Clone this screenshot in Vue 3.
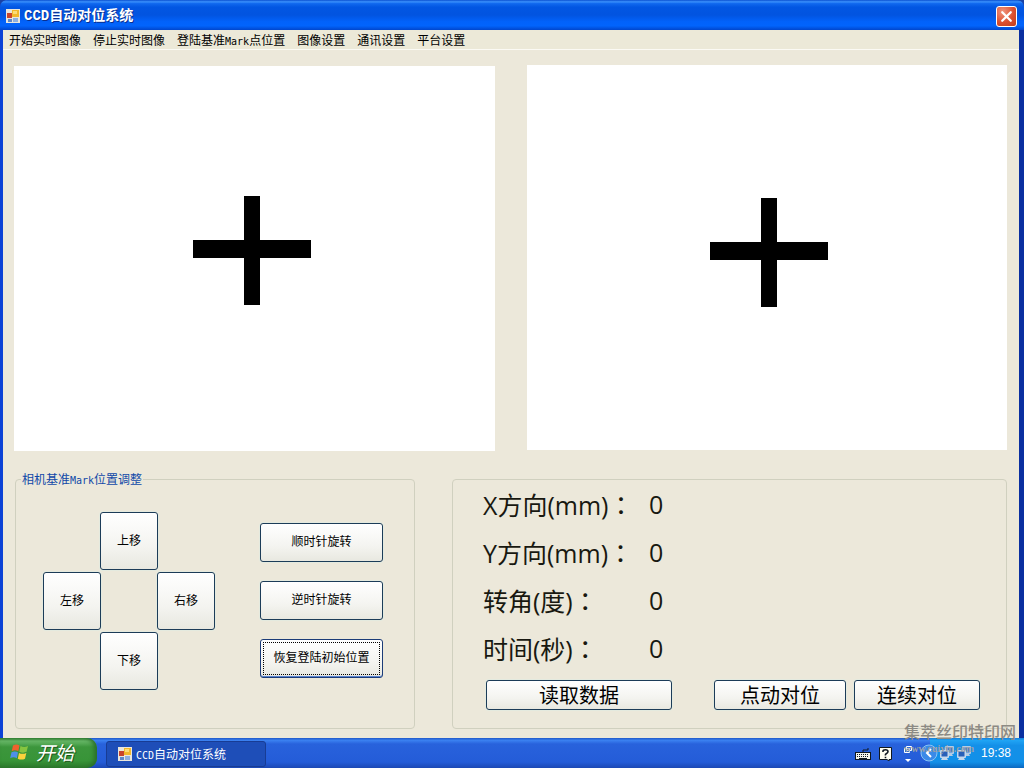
<script setup>
import { reactive } from 'vue'

const menus = [
  ['开始实时图像'],
  ['停止实时图像'],
  ['登陆基准', 'Mark', '点位置'],
  ['图像设置'],
  ['通讯设置'],
  ['平台设置']
]
const moves = [
  { name: 'up', text: '上移' },
  { name: 'left', text: '左移' },
  { name: 'right', text: '右移' },
  { name: 'down', text: '下移' }
]
const readings = reactive([
  { id: 'x', label: 'X方向(mm)', value: 0 },
  { id: 'y', label: 'Y方向(mm)', value: 0 },
  { id: 'angle', label: '转角(度)', value: 0 },
  { id: 'time', label: '时间(秒)', value: 0 }
])
</script>

<template>
  <div class="desktop">
    <div class="window">
      <header class="titlebar">
        <svg class="app-icon" viewBox="0 0 14 14" aria-hidden="true">
          <rect width="14" height="14" fill="#e9e6dc" />
          <rect x="1" y="4" width="5" height="5" fill="#c8452c" />
          <rect x="6" y="1" width="7" height="7" fill="#f2b82c" />
          <rect x="7" y="2" width="4" height="3" fill="#fbdc78" />
          <rect x="2" y="10" width="4" height="3" fill="#5f87c9" />
          <rect x="7" y="9" width="5" height="4" fill="#8fb0e0" />
        </svg>
        <h1>CCD自动对位系统</h1>
        <button class="close" aria-label="关闭">
          <svg viewBox="0 0 20 20" aria-hidden="true">
            <path d="M5.5 5.500 14.500 14.500M14.500 5.500 5.500 14.500" stroke="#fff" stroke-width="2.400" stroke-linecap="round" />
          </svg>
        </button>
      </header>

      <nav class="menubar">
        <button v-for="m in menus" :key="m[0]">{{ m[0] }}<span v-if="m[1]" class="latin">{{ m[1] }}</span>{{ m[2] }}</button>
      </nav>

      <main class="client">
        <div class="cameras">
          <svg class="camera first" viewBox="0 0 481 385" role="img" aria-label="相机1">
            <rect width="481" height="385" fill="#fff" />
            <rect x="179" y="174" width="118" height="18" />
            <rect x="230" y="130" width="16" height="109" />
          </svg>
          <svg class="camera" viewBox="0 0 480 385" role="img" aria-label="相机2">
            <rect width="480" height="385" fill="#fff" />
            <rect x="183" y="177" width="118" height="18" />
            <rect x="234" y="133" width="16" height="109" />
          </svg>
        </div>

        <div class="panels">
          <fieldset class="adjust">
            <legend>相机基准<span class="latin">Mark</span>位置调整</legend>
            <div class="adjust-body">
              <div class="pad">
                <button v-for="m in moves" :key="m.name" class="btn" :class="m.name">{{ m.text }}</button>
              </div>
              <div class="rotate">
                <button class="btn">顺时针旋转</button>
                <button class="btn">逆时针旋转</button>
                <button class="btn focused">恢复登陆初始位置</button>
              </div>
            </div>
          </fieldset>

          <section class="results">
            <div v-for="r in readings" :key="r.id" class="reading">
              <label :for="r.id">{{ r.label }}<span class="colon">：</span></label>
              <output :id="r.id">{{ r.value }}</output>
            </div>
            <div class="actions">
              <button class="btn read">读取数据</button>
              <button class="btn jog">点动对位</button>
              <button class="btn loop">连续对位</button>
            </div>
          </section>
        </div>
      </main>
    </div>

    <footer class="taskbar">
      <button class="start">
        <svg viewBox="0 0 20 20" aria-hidden="true">
          <path d="M3 3.500Q6.500 1.500 9.500 3.500L8.300 9.300Q5 7.500 1.700 9.200Z" fill="#f0622d" />
          <path d="M10.500 4Q14 5.800 18 4L16.600 9.800Q13 11.500 9.300 9.700Z" fill="#86c440" />
          <path d="M1.500 10.300Q5 8.600 8 10.400L6.800 16.200Q3.500 14.500 .2 16.200Z" fill="#4f8fe8" />
          <path d="M9 10.900Q12.600 12.600 16.300 10.900L15 16.700Q11.500 18.500 7.800 16.700Z" fill="#fbd23c" />
        </svg>
        <span>开始</span>
      </button>
      <button class="task">
        <svg class="app-icon" viewBox="0 0 14 14" aria-hidden="true">
          <rect width="14" height="14" fill="#e9e6dc" />
          <rect x="1" y="4" width="5" height="5" fill="#c8452c" />
          <rect x="6" y="1" width="7" height="7" fill="#f2b82c" />
          <rect x="7" y="2" width="4" height="3" fill="#fbdc78" />
          <rect x="2" y="10" width="4" height="3" fill="#5f87c9" />
          <rect x="7" y="9" width="5" height="4" fill="#8fb0e0" />
        </svg>
        <span><span class="latin">CCD</span>自动对位系统</span>
      </button>

      <div class="language">
        <svg class="keyboard" viewBox="0 0 16 12" aria-hidden="true">
          <path d="M8 4V2H13V0" fill="none" stroke="#101820" />
          <rect x=".5" y="4.500" width="15" height="7" fill="#f4f4ea" stroke="#101820" />
          <path d="M2 6.500H14M2 8.500H14" stroke="#101820" stroke-dasharray="1 1" />
          <path d="M4 10.500H12" stroke="#101820" />
        </svg>
        <svg class="help" viewBox="0 0 13 14" aria-hidden="true">
          <path d="M.5 .5H12.500V12.500H10V14L8 12.500H.5Z" fill="#fffff0" stroke="#101820" />
          <path d="M4 5V4Q4 2.800 6.500 2.800T9 4.600Q9 5.800 7.500 6.500T6.500 8.500M6.500 9.700V11.200" fill="none" stroke="#101820" stroke-width="1.600" />
        </svg>
        <svg class="restore" viewBox="0 0 10 18" aria-hidden="true">
          <path d="M3.500 1.500H8.500V5.500H3.500ZM1.500 3.500H6.500V7.500H1.500Z" fill="#2a63d8" stroke="#fff" />
          <path d="M2 14H8L5 17Z" fill="#fff" />
        </svg>
      </div>

      <div class="tray">
        <svg class="arrow" viewBox="0 0 18 18" aria-hidden="true">
          <circle cx="9" cy="9" r="8" fill="#3a8ae8" stroke="#8ac4f4" />
          <path d="M11 5 7 9 11 13" fill="none" stroke="#fff" stroke-width="2" />
        </svg>
        <svg v-for="n in 2" :key="n" class="network" viewBox="0 0 16 16" aria-hidden="true">
          <rect x="6" y="1" width="9" height="8" rx="1" fill="#b4cce4" />
          <rect x="7.500" y="2.500" width="6" height="5" fill="#3c7cd0" />
          <path d="M9 9H13L14 11H9Z" fill="#b4cce4" />
          <rect x="1" y="5" width="9" height="8" rx="1" fill="#c4d8ec" />
          <rect x="2.500" y="6.500" width="6" height="5" fill="#2860b8" />
          <path d="M3 13H8L9 15H2Z" fill="#c4d8ec" />
        </svg>
        <time>19:38</time>
      </div>
    </footer>

    <div class="watermark" aria-hidden="true">
      <span>集萃丝印特印网</span>
      <small>www.cuiyin.com</small>
    </div>
  </div>
</template>

<style>
body {
  background: #ece9d8;
}
</style>

<style scoped>
* {
  box-sizing: border-box;
}
.desktop {
  position: relative;
  min-height: 100vh;
  display: flex;
  flex-direction: column;
  background: #1941a5;
  font: 12px/14px "Noto Sans CJK SC", sans-serif;
  color: #000;
}
button {
  margin: 0;
  padding: 0;
  border: 0;
  background: none;
  font: inherit;
  color: inherit;
}
svg {
  display: block;
  flex: none;
}
.latin {
  font: 10px/10px "DejaVu Sans Mono", monospace;
}
.window {
  flex: 1;
  display: flex;
  flex-direction: column;
  border: solid #0b42d6;
  border-width: 0 5px 0 3px;
  border-right-color: #0a2fa0;
  border-radius: 8px 8px 0 0;
  background: #ece9d8;
}
.titlebar {
  height: 30px;
  margin: 0 -5px 0 -3px;
  padding: 2px 7px 0 6px;
  display: flex;
  align-items: center;
  border-radius: 7px 7px 0 0;
  background: linear-gradient(#0a50d0 0, #3a90fc 6%, #1068ee 12%, #0256e2 24%, #0254e0 50%, #0262fa 72%, #0264fc 86%, #0146cc 100%);
  color: #fff;
}
.app-icon {
  width: 14px;
  height: 14px;
}
h1 {
  flex: 1;
  margin: 0 0 0 4px;
  font: bold 14px/20px "Liberation Mono", "Noto Sans CJK SC", monospace;
  text-shadow: 1px 1px #0a2f90;
}
.close {
  width: 21px;
  height: 21px;
  border: 1px solid #fff;
  border-radius: 3px;
  background: radial-gradient(circle at 30% 25%, #f0947c, #dc5030 55%, #c03c18);
}
.close svg {
  width: 19px;
  height: 19px;
}
.menubar {
  height: 20px;
  padding: 0 6px;
  display: flex;
  align-items: center;
  gap: 12px;
  border-bottom: 1px solid #fbfaf4;
}
.client {
  flex: 1;
  padding: 15px 12px 8px 11px;
  background: #ece8da;
}
.cameras {
  display: grid;
  grid-template-columns: 481fr 480fr;
  gap: 32px;
  align-items: start;
}
.camera {
  width: 100%;
  height: auto;
}
.camera.first {
  margin-top: 1px;
}
.panels {
  display: grid;
  grid-template-columns: 400fr 555fr;
  gap: 37px;
  margin: 21px 0 0 1px;
}
.adjust {
  min-width: 0;
  margin: 0;
  padding: 0 0 0 27px;
  border: 1px solid #d0d0bf;
  border-radius: 4px;
}
legend {
  height: 14px;
  margin-left: -22px;
  padding: 0 1px;
  color: #1048a8;
}
.adjust-body {
  display: flex;
  gap: 46px;
  padding-top: 26px;
}
.btn {
  border: 1px solid #1c3c58;
  border-radius: 3px;
  background: linear-gradient(#fff, #f4f4f0 60%, #e8e8e0);
  box-shadow: 0 0 0 1px #e4eadf;
}
.pad {
  display: grid;
  grid-template: repeat(3, 58px) / repeat(3, 57px);
  row-gap: 2px;
}
.pad .btn {
  width: 58px;
  padding-bottom: 2px;
}
.up,
.down {
  grid-column: 2;
}
.left {
  grid-column: 1;
}
.right {
  grid-column: 3;
}
.rotate {
  display: flex;
  flex-direction: column;
  gap: 19px;
  padding-top: 11px;
}
.rotate .btn {
  width: 123px;
  height: 39px;
  padding-bottom: 4px;
}
.rotate .focused {
  border-color: #1c3c78;
  box-shadow: inset 0 -1px #5a84d0;
  outline: 1px dotted #000;
  outline-offset: -4px;
}
.results {
  margin-top: 7px;
  padding: 0 26px 18px 30px;
  border: 1px solid #d0d0bf;
  border-radius: 4px;
}
.reading {
  display: grid;
  grid-template-columns: 166px 1fr;
  align-items: center;
  height: 48px;
  font: 25px/32px "Open Sans", "Noto Sans CJK SC", sans-serif;
  color: #181810;
}
.colon {
  font-family: "Noto Sans CJK TC", sans-serif;
}
.actions {
  display: flex;
  gap: 8px;
  padding: 8px 0 0 3px;
}
.actions .btn {
  height: 30px;
  font: 20px/26px "Noto Sans CJK SC", sans-serif;
}
.read {
  width: 186px;
  margin-right: auto;
}
.jog {
  width: 132px;
}
.loop {
  width: 126px;
}
.taskbar {
  display: flex;
  align-items: stretch;
  height: 30px;
  background: linear-gradient(#2058c8 0, #3a80f0 8%, #2862dc 20%, #245cd8 80%, #1c48b4);
  color: #fff;
}
.start {
  display: flex;
  align-items: center;
  gap: 6px;
  width: 97px;
  padding: 0 0 2px 10px;
  border-radius: 0 10px 10px 0;
  background: linear-gradient(#3a8a3a 0, #68b868 10%, #3c963c 30%, #389438 75%, #2c7a2c);
  box-shadow: inset -3px 0 4px #2a702a;
  font: italic 19px/26px "Noto Sans CJK SC", sans-serif;
  text-shadow: 1px 1px #205820;
}
.start svg {
  width: 20px;
  height: 20px;
}
.task {
  display: flex;
  align-items: center;
  gap: 4px;
  width: 160px;
  margin: 3px 0 1px 9px;
  padding-left: 11px;
  border: 1px solid #183c94;
  border-radius: 3px;
  background: #1e4eb8;
}
.language {
  display: flex;
  align-items: center;
  gap: 8px;
  margin-left: auto;
  padding: 2px 17px 0 0;
}
.keyboard {
  width: 16px;
  height: 12px;
}
.help {
  width: 13px;
  height: 14px;
}
.restore {
  width: 10px;
  height: 18px;
  margin-left: 3px;
}
.tray {
  display: flex;
  align-items: center;
  gap: 1px;
  width: 94px;
  padding-right: 13px;
  background: linear-gradient(#1480dc 0, #20a4f4 8%, #1490e8 25%, #1290e8 80%, #0c68c0);
}
.arrow {
  width: 18px;
  height: 18px;
  margin-left: -10px;
}
.network {
  width: 16px;
  height: 16px;
}
time {
  margin-left: auto;
  font: 12px/14px "Liberation Sans", sans-serif;
}
.watermark {
  position: absolute;
  right: 8px;
  bottom: 11px;
  display: flex;
  flex-direction: column;
  font: 500 16px/20px "Noto Sans CJK SC", sans-serif;
  color: #8c8a84;
  pointer-events: none;
}
.watermark small {
  font: bold 10px/16px "Liberation Serif", serif;
  color: #9a9fa8;
}
</style>
